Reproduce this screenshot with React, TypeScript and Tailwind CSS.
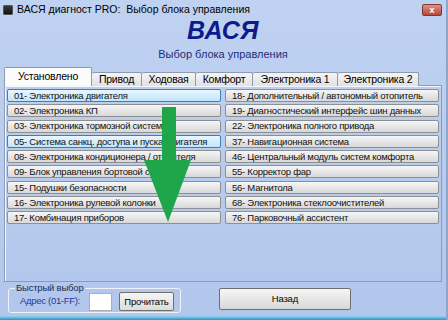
import React from "react";

const leftItems = [
  { label: "01- Электроника двигателя", active: true },
  { label: "02- Электроника КП" },
  { label: "03- Электроника тормозной системы" },
  { label: "05- Система санкц. доступа и пуска двигателя", active: true },
  { label: "08- Электроника кондиционера / отопителя" },
  { label: "09- Блок управления бортовой сети" },
  { label: "15- Подушки безопасности" },
  { label: "16- Электроника рулевой колонки" },
  { label: "17- Комбинация приборов" },
];

const rightItems = [
  { label: "18- Дополнительный / автономный отопитель" },
  { label: "19- Диагностический интерфейс шин данных" },
  { label: "22- Электроника полного привода" },
  { label: "37- Навигационная система" },
  { label: "46- Центральный модуль систем комфорта" },
  { label: "55- Корректор фар" },
  { label: "56- Магнитола" },
  { label: "68- Электроника стеклоочистителей" },
  { label: "76- Парковочный ассистент" },
];

const tabs = [
  { label: "Установлено", w: "w-[88px]", selected: true },
  { label: "Привод", w: "w-[50px]" },
  { label: "Ходовая", w: "w-[54px]" },
  { label: "Комфорт", w: "w-[57px]" },
  { label: "Электроника 1", w: "w-[85px]" },
  { label: "Электроника 2", w: "w-[81px]" },
];

const ModuleButton = ({ label, active }: { label: string; active?: boolean }) => (
  <button
    className={
      active
        ? "h-[13px] w-full flex items-center pl-[6px] rounded-[2px] border border-[#3c7fb1] bg-gradient-to-b from-[#eaf6fd] to-[#bee6fd] text-[9.5px] tracking-[-0.25px] leading-none text-[#111] whitespace-nowrap overflow-hidden"
        : "h-[13px] w-full flex items-center pl-[6px] rounded-[2px] border border-[#8e8f8f] bg-gradient-to-b from-[#f6f6f6] to-[#d8d8d8] text-[9.5px] tracking-[-0.25px] leading-none text-[#111] whitespace-nowrap overflow-hidden"
    }
  >
    {label}
  </button>
);

export default function App() {
  return (
    <div className="relative w-[448px] h-[320px] overflow-hidden flex flex-col bg-gradient-to-b from-[#bfd2f1] to-[#b2c6ec] border-r-2 border-[#8ea5cc] font-['Liberation_Sans',Arial,sans-serif] text-black">
      {/* title bar */}
      <div className="h-[20px] flex items-center pl-[3px] pr-[4px]">
        <div className="w-[10px] h-[10px] rounded-[1px] bg-gradient-to-b from-[#3a3a3a] to-[#111] border border-[#555]" />
        <span className="ml-[4px] text-[10.5px] whitespace-pre">ВАСЯ диагност PRO:  Выбор блока управления</span>
        <div className="ml-auto w-[20px] h-[12px] rounded-[2px] border border-[#7a3a30] bg-gradient-to-b from-[#e09080] to-[#b8483a] flex items-center justify-center text-white text-[9px] font-bold leading-none">
          x
        </div>
      </div>

      {/* header */}
      <div className="text-center text-[25px] leading-[20px] font-bold italic text-[#0d1a8c] tracking-[0.5px]">ВАСЯ</div>
      <div className="mt-[8px] text-center text-[11px] leading-[12px] text-[#1c2d78]">Выбор блока управления</div>

      {/* tabs */}
      <div className="mt-[8px] mx-[4px] flex items-end h-[18px] relative z-10 -mb-px">
        {tabs.map((t) =>
          t.selected ? (
            <div
              key={t.label}
              className={`${t.w} h-[19px] flex items-center justify-center border border-b-0 border-[#8d9ab0] rounded-t-[2px] bg-[#fbfbfb] text-[10.5px] tracking-[-0.2px] font-normal pb-[1px]`}
            >
              {t.label}
            </div>
          ) : (
            <div
              key={t.label}
              className={`${t.w} h-[14px] flex items-center justify-center border border-l-0 border-b-0 border-[#8d9ab0] rounded-t-[2px] bg-gradient-to-b from-[#f4f4f4] to-[#e2e2e2] text-[10.5px] tracking-[-0.2px] font-normal`}
            >
              {t.label}
            </div>
          )
        )}
      </div>

      {/* tab panel */}
      <div className="mx-[4px] h-[197px] border border-[#8d9ab0] shadow-[inset_1px_1px_0_#f4f8fe] grid grid-cols-2 gap-x-[4px] content-start pl-[2px] pr-[2px] pt-[3px]">
        <div className="flex flex-col gap-[2.3px]">
          {leftItems.map((it) => (
            <ModuleButton key={it.label} {...it} />
          ))}
        </div>
        <div className="flex flex-col gap-[2.3px]">
          {rightItems.map((it) => (
            <ModuleButton key={it.label} {...it} />
          ))}
        </div>
      </div>

      {/* bottom row */}
      <div className="flex items-start px-[8px] mt-[2px]">
        <fieldset className="w-[170px] border border-[#eef3fb] rounded-[3px] px-[6px] pb-[1px]">
          <legend className="px-[1px] text-[9.5px] tracking-[-0.2px] leading-[8px] text-[#1c2d55]">Быстрый выбор</legend>
          <div className="flex items-center">
            <span className="ml-[5px] text-[9.5px] tracking-[-0.3px] whitespace-nowrap text-[#1a3aa0]">Адрес (01-FF):</span>
            <input className="ml-[9px] w-[23px] h-[18px] bg-white border border-[#abadb3] outline-none" />
            <button className="ml-[7px] w-[55px] h-[19px] rounded-[2px] border border-[#707070] bg-gradient-to-b from-[#f4f4f4] to-[#dcdcdc] text-[9.5px] tracking-[-0.2px] leading-none">
              Прочитать
            </button>
          </div>
        </fieldset>
        <button className="ml-[38px] mt-[4px] w-[132px] h-[22px] rounded-[2px] border border-[#707070] bg-gradient-to-b from-[#f6f6f6] to-[#d8d8d8] text-[9.5px] tracking-[-0.2px] leading-none">
          Назад
        </button>
      </div>

      {/* bottom frame edge */}
      <div className="mt-auto h-[4px] bg-gradient-to-b from-[#8fd6f2] to-[#2f8fc4]" />

      {/* green arrow drawn over the list */}
      <svg className="absolute left-0 top-0 pointer-events-none" width="448" height="320" viewBox="0 0 448 320">
        <polygon
          points="162,107 176,107 176,160 191,160 168,222 144,160 162,160"
          fill="#1fa64b"
        />
      </svg>
    </div>
  );
}
